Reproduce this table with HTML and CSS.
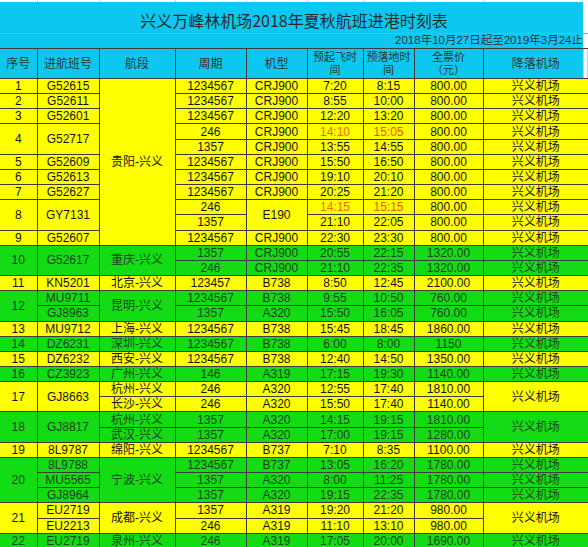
FILE: index.html
```html
<!DOCTYPE html>
<html lang="zh">
<head>
<meta charset="utf-8">
<title>兴义万峰林机场2018年夏秋航班进港时刻表</title>
<link rel="stylesheet" href="styles.css">
</head>
<body>
<table class="sched">
<colgroup>
<col class="c1"><col class="c2"><col class="c3"><col class="c4"><col class="c5"><col class="c6"><col class="c7"><col class="c8"><col class="c9">
</colgroup>
<tr class="strip"><td></td><td></td><td></td><td></td><td></td><td></td><td></td><td></td><td></td></tr>
<tr class="title"><td colspan="9">兴义万峰林机场2018年夏秋航班进港时刻表</td></tr>
<tr class="date"><td colspan="9">2018年10月27日起至2019年3月24止</td></tr>
<tr class="head"><td>序号</td><td>进航班号</td><td>航段</td><td>周期</td><td>机型</td><td><span class="l1">预起飞时</span><span class="l2">间</span></td><td><span class="l1">预落地时</span><span class="l2">间</span></td><td><span class="l1">全票价</span><span class="l2">（元）</span></td><td class="lastc">降落机场</td></tr>

<tr class="y"><td>1</td><td>G52615</td><td rowspan="11">贵阳-兴义</td><td>1234567</td><td>CRJ900</td><td>7:20</td><td>8:15</td><td>800.00</td><td>兴义机场</td></tr>
<tr class="y"><td>2</td><td>G52611</td><td>1234567</td><td>CRJ900</td><td>8:55</td><td>10:00</td><td>800.00</td><td>兴义机场</td></tr>
<tr class="y"><td>3</td><td>G52601</td><td>1234567</td><td>CRJ900</td><td>12:20</td><td>13:20</td><td>800.00</td><td>兴义机场</td></tr>
<tr class="y"><td rowspan="2">4</td><td rowspan="2">G52717</td><td>246</td><td>CRJ900</td><td class="o">14:10</td><td class="o2">15:05</td><td>800.00</td><td>兴义机场</td></tr>
<tr class="y"><td>1357</td><td>CRJ900</td><td>13:55</td><td>14:55</td><td>800.00</td><td>兴义机场</td></tr>
<tr class="y"><td>5</td><td>G52609</td><td>1234567</td><td>CRJ900</td><td>15:50</td><td>16:50</td><td>800.00</td><td>兴义机场</td></tr>
<tr class="y"><td>6</td><td>G52613</td><td>1234567</td><td>CRJ900</td><td>19:10</td><td>20:10</td><td>800.00</td><td>兴义机场</td></tr>
<tr class="y"><td>7</td><td>G52627</td><td>1234567</td><td>CRJ900</td><td>20:25</td><td>21:20</td><td>800.00</td><td>兴义机场</td></tr>
<tr class="y"><td rowspan="2">8</td><td rowspan="2">GY7131</td><td>246</td><td rowspan="2">E190</td><td class="o">14:15</td><td class="o2">15:15</td><td>800.00</td><td>兴义机场</td></tr>
<tr class="y"><td>1357</td><td>21:10</td><td>22:05</td><td>800.00</td><td>兴义机场</td></tr>
<tr class="y"><td>9</td><td>G52607</td><td>1234567</td><td>CRJ900</td><td>22:30</td><td>23:30</td><td>800.00</td><td>兴义机场</td></tr>

<tr class="g"><td rowspan="2">10</td><td rowspan="2">G52617</td><td rowspan="2">重庆-兴义</td><td>1357</td><td>CRJ900</td><td>20:55</td><td>22:15</td><td>1320.00</td><td>兴义机场</td></tr>
<tr class="g"><td>246</td><td>CRJ900</td><td>21:10</td><td>22:35</td><td>1320.00</td><td>兴义机场</td></tr>

<tr class="y"><td>11</td><td>KN5201</td><td>北京-兴义</td><td>123457</td><td>B738</td><td>8:50</td><td>12:45</td><td>2100.00</td><td>兴义机场</td></tr>

<tr class="g"><td rowspan="2">12</td><td>MU9711</td><td rowspan="2">昆明-兴义</td><td>1234567</td><td>B738</td><td>9:55</td><td>10:50</td><td>760.00</td><td>兴义机场</td></tr>
<tr class="g"><td>GJ8963</td><td>1357</td><td>A320</td><td>15:50</td><td>16:05</td><td>760.00</td><td>兴义机场</td></tr>

<tr class="y"><td>13</td><td>MU9712</td><td>上海-兴义</td><td>1234567</td><td>B738</td><td>15:45</td><td>18:45</td><td>1860.00</td><td>兴义机场</td></tr>
<tr class="g"><td>14</td><td>DZ6231</td><td>深圳-兴义</td><td>1234567</td><td>B738</td><td>6:00</td><td>8:00</td><td>1150</td><td>兴义机场</td></tr>
<tr class="y"><td>15</td><td>DZ6232</td><td>西安-兴义</td><td>1234567</td><td>B738</td><td>12:40</td><td>14:50</td><td>1350.00</td><td>兴义机场</td></tr>
<tr class="g"><td>16</td><td>CZ3923</td><td>广州-兴义</td><td>146</td><td>A319</td><td>17:15</td><td>19:30</td><td>1140.00</td><td>兴义机场</td></tr>

<tr class="y"><td rowspan="2">17</td><td rowspan="2">GJ8663</td><td>杭州-兴义</td><td>246</td><td>A320</td><td>12:55</td><td>17:40</td><td>1810.00</td><td rowspan="2">兴义机场</td></tr>
<tr class="y"><td>长沙-兴义</td><td>246</td><td>A320</td><td>15:50</td><td>17:40</td><td>1140.00</td></tr>

<tr class="g"><td rowspan="2">18</td><td rowspan="2">GJ8817</td><td>杭州-兴义</td><td>1357</td><td>A320</td><td>14:15</td><td>19:15</td><td>1810.00</td><td rowspan="2">兴义机场</td></tr>
<tr class="g"><td>武汉-兴义</td><td>1357</td><td>A320</td><td>17:00</td><td>19:15</td><td>1280.00</td></tr>

<tr class="y"><td>19</td><td>8L9787</td><td>绵阳-兴义</td><td>1234567</td><td>B737</td><td>7:10</td><td>8:35</td><td>1100.00</td><td>兴义机场</td></tr>

<tr class="g"><td rowspan="3">20</td><td>8L9788</td><td rowspan="3">宁波-兴义</td><td>1234567</td><td>B737</td><td>13:05</td><td>16:20</td><td>1780.00</td><td>兴义机场</td></tr>
<tr class="g"><td>MU5565</td><td>1357</td><td>A320</td><td>8:00</td><td>11:25</td><td>1780.00</td><td>兴义机场</td></tr>
<tr class="g"><td>GJ8964</td><td>1357</td><td>A320</td><td>19:15</td><td>22:35</td><td>1780.00</td><td>兴义机场</td></tr>

<tr class="y"><td rowspan="2">21</td><td>EU2719</td><td rowspan="2">成都-兴义</td><td>1357</td><td>A319</td><td>19:20</td><td>21:20</td><td>980.00</td><td rowspan="2">兴义机场</td></tr>
<tr class="y"><td>EU2213</td><td>246</td><td>A319</td><td>11:10</td><td>13:10</td><td>980.00</td></tr>

<tr class="g"><td>22</td><td>EU2719</td><td>泉州-兴义</td><td>246</td><td>A319</td><td>17:05</td><td>20:00</td><td>1690.00</td><td>兴义机场</td></tr>
</table>
</body>
</html>
```
FILE: styles.css
```css
html, body {
  margin: 0;
  padding: 0;
  background: #ffffff;
  overflow: hidden;
}
body {
  width: 588px;
  height: 547px;
  font-family: "Liberation Sans", "Noto Sans CJK SC", sans-serif;
}
.sched {
  width: 588px;
  table-layout: fixed;
  border-collapse: collapse;
  font-size: 12px;
  line-height: 1;
  color: #111;
}
.c1 { width: 37px; }
.c2 { width: 62px; }
.c3 { width: 76px; }
.c4 { width: 71px; }
.c5 { width: 61px; }
.c6 { width: 56px; }
.c7 { width: 51px; }
.c8 { width: 69px; }
.c9 { width: 105px; }
.sched td {
  padding: 0;
  text-align: center;
  vertical-align: middle;
  border: 1px solid #3c3c3c;
  white-space: nowrap;
  overflow: hidden;
}
.strip td {
  height: 2px;
  background: #ffffff;
  border: none;
  border-right: 1px solid #cfcfcf;
}
.title td {
  height: 26px;
  background: linear-gradient(to right, #0cc8f0 583px, #ffffff 583px);
  border: none;
  border-bottom: 1px solid #5ab8d8;
  font-size: 16px;
  color: #2a2a2a;
  padding-top: 5px;
  font-family: "Noto Sans CJK SC", "Liberation Sans", sans-serif;
}
.date td {
  height: 14px;
  background: linear-gradient(to right, #0cc8f0 583px, #ffffff 583px);
  border: none;
  text-align: right;
  padding-right: 5px;
  font-size: 11.5px;
  color: #333;
}
.head td {
  height: 29px;
  background: #0cc8f0;
  color: #333;
  font-size: 12px;
  line-height: 12px;
  border-top: 1px solid #3c3c3c;
  font-family: "Liberation Sans", "Noto Sans CJK SC", sans-serif;
}
.head .l1, .head .l2 {
  display: block;
  font-size: 11px;
  line-height: 13px;
}
.head td.lastc {
  border-right: none;
  background: linear-gradient(to right, #0cc8f0 100px, #ffffff 100px);
}
.y td, .g td {
  height: 14.16px;
}
.y td { background: #ffff00; color: #141414; }
.g td { background: #14dc14; color: #1f3f1f; }
.sched tr > td:first-child { border-left: none; }
.sched tr > td:last-child { border-right: none; }
.sched td.o { color: #f06a00; }
.sched td.o2 { color: #f25000; }
```
